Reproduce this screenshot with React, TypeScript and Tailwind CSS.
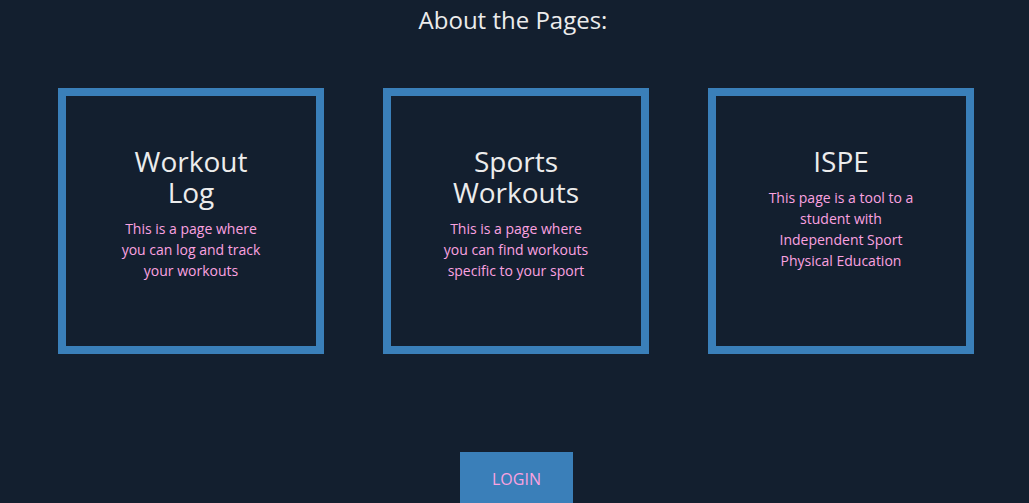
const pages = [
  {
    title: "Workout Log",
    text: "This is a page where you can log and track your workouts",
  },
  {
    title: "Sports Workouts",
    text: "This is a page where you can find workouts specific to your sport",
  },
  {
    title: "ISPE",
    text: "This page is a tool to a student with Independent Sport Physical Education",
  },
];

export default function App() {
  return (
    <div className="min-h-screen bg-[#131f2f] font-['Open_Sans',sans-serif] flex flex-col items-center">
      <h1 className="pt-1 mr-[3px] text-2xl leading-8 text-[#ececec]">About the Pages:</h1>

      <div className="w-full flex gap-[59px] pl-[58px] mt-[52px]">
        {pages.map((page) => (
          <div
            key={page.title}
            className="w-[266px] h-[266px] border-8 border-[#3a7fb9] p-[50px] flex flex-col items-center text-center"
          >
            <h2 className="text-[28px] leading-[31px] text-[#ececec] mb-[10px]">{page.title}</h2>
            <p className="text-sm leading-[21px] text-[#fba2e0]">{page.text}</p>
          </div>
        ))}
      </div>

      <button className="mt-[98px] ml-1 bg-[#3a7fb9] text-[#fba2e0] text-base leading-6 px-8 py-[15px]">
        LOGIN
      </button>
    </div>
  );
}
